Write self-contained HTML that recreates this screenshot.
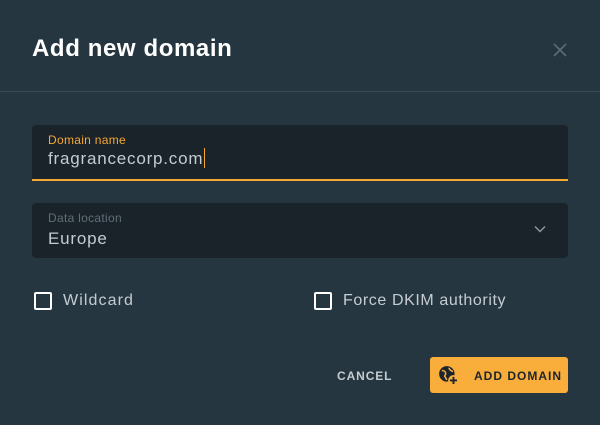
<!DOCTYPE html>
<html><head><style>
*{box-sizing:border-box;margin:0;padding:0}
body{width:600px;height:425px;background:#253640;font-family:"Liberation Sans",sans-serif;position:relative;overflow:hidden}
.title{position:absolute;left:32px;top:35px;color:#fff;font-size:24px;font-weight:bold;letter-spacing:0.6px}
.x{position:absolute;left:551px;top:41px;width:18px;height:18px}
.hr{position:absolute;left:0;top:91px;width:600px;height:1px;background:#3c4c55}
.f{position:absolute;left:32px;width:536px;background:#1a232a;border-radius:4px}
.f1{top:125px;height:56px;border-bottom:2px solid #f6a832;border-radius:4px 4px 0 0}
.f2{top:203px;height:55px}
.lab{position:absolute;left:16px;font-size:12px;letter-spacing:0.3px}
.val{position:absolute;left:16px;font-size:17px;color:#c5ccd1;letter-spacing:0.8px}
.cb{position:absolute;top:292px;width:18px;height:18px;border:2px solid #fff;border-radius:2px}
.cl{position:absolute;top:292px;color:#c5ccd1;font-size:16px}
.cancel{position:absolute;left:337px;top:369px;color:#c5ccd1;font-size:12px;font-weight:bold;letter-spacing:0.9px}
.btn{position:absolute;left:430px;top:357px;width:138px;height:36px;background:#f9ad3b;border-radius:3px}
.btn span{position:absolute;left:44px;top:12px;font-size:12px;font-weight:bold;letter-spacing:1px;color:#1c252b}
</style></head><body>
<div class="title">Add new domain</div>
<svg class="x" viewBox="0 0 18 18"><path d="M3 3L15 15M15 3L3 15" stroke="#5d6c74" stroke-width="1.6"/></svg>
<div class="hr"></div>
<div class="f f1"><div class="lab" style="top:8px;color:#f6a832">Domain name</div><div class="val" style="top:23px">fragrancecorp.com<span style="display:inline-block;width:1px;height:20px;background:#f6a832;vertical-align:-4px;margin-left:1px"></span></div></div>
<div class="f f2"><div class="lab" style="top:8px;color:#5f6e77">Data location</div><div class="val" style="top:26px">Europe</div>
<svg style="position:absolute;left:502px;top:22px" width="12" height="8" viewBox="0 0 12 8"><path d="M1 1.5L6 6.5L11 1.5" stroke="#8b979e" stroke-width="1.5" fill="none"/></svg></div>
<div class="cb" style="left:34px"></div><div class="cl" style="left:63px;letter-spacing:1.1px">Wildcard</div>
<div class="cb" style="left:314px"></div><div class="cl" style="left:343px;letter-spacing:0.6px">Force DKIM authority</div>
<div class="cancel">CANCEL</div>
<div class="btn"><svg style="position:absolute;left:8px;top:8px" width="21" height="21" viewBox="0 0 19 19"><circle cx="8" cy="8" r="7" fill="#1c252b"/><path d="M3.5 5c2 0 3.5 1 3.5 3l-1 2 2 3.5M10 2.5c0 2 2 2.5 3.5 3.5" stroke="#f9ad3b" stroke-width="1.4" fill="none"/><circle cx="14" cy="14" r="4.8" fill="#f9ad3b"/><path d="M14 10.8v6.4M10.8 14h6.4" stroke="#1c252b" stroke-width="1.7"/></svg><span>ADD DOMAIN</span></div>
</body></html>
